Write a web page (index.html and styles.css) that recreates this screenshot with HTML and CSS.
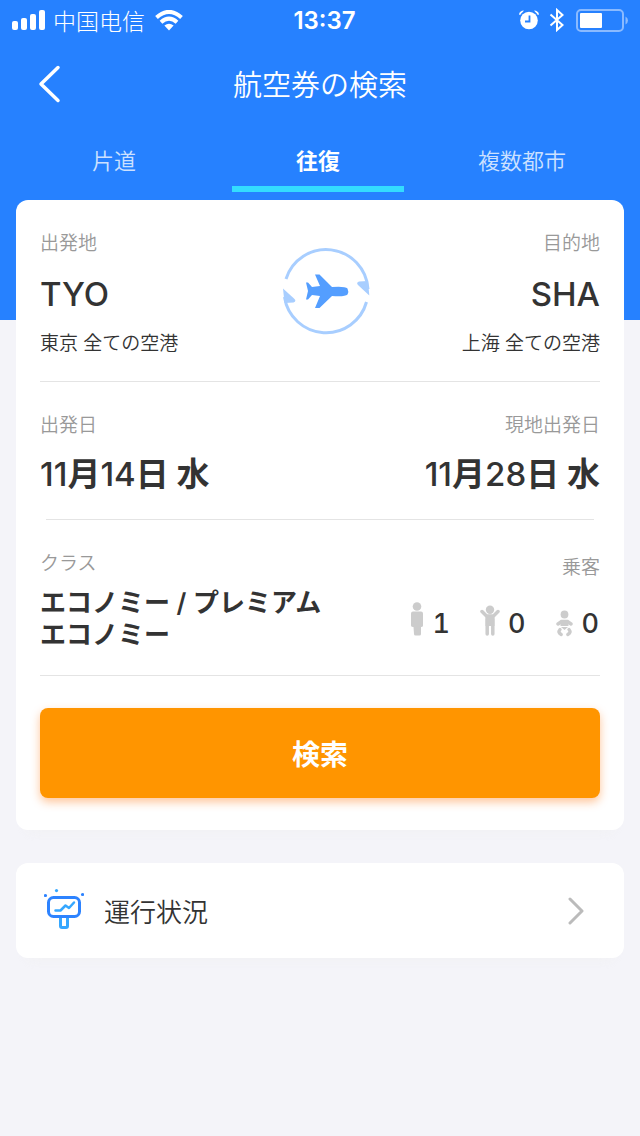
FILE: index.html
```html
<!DOCTYPE html>
<html lang="ja">
<head>
<meta charset="utf-8">
<meta name="viewport" content="width=device-width, initial-scale=1">
<title>航空券の検索</title>
<link rel="stylesheet" href="styles.css">
</head>
<body>
<header class="header">
  <div class="status">
    <div class="status-side">
      <svg width="34" height="20" viewBox="0 0 34 20" fill="#fff" aria-hidden="true"><rect x="0" y="11" width="6" height="9" rx="2"/><rect x="9" y="8" width="6" height="12" rx="2"/><rect x="18" y="4" width="6" height="16" rx="2"/><rect x="27" y="0" width="6" height="20" rx="2"/></svg>
      <span class="carrier" lang="zh-CN">中国电信</span>
      <svg class="wifi" width="28" height="21" viewBox="0 0 28 21" aria-hidden="true"><path d="M1.500 7.500Q14-3.700 26.500 7.500M6 12.200Q14 5 22 12.200" fill="none" stroke="#fff" stroke-width="4"/><path d="M9.400 15.600Q14 11.800 18.600 15.600L14 20.500z" fill="#fff"/></svg>
    </div>
    <span class="clock">13:37</span>
    <div class="status-side status-right">
      <svg width="20" height="20" viewBox="0 0 20 20" aria-hidden="true"><circle cx="10" cy="10.500" r="8.800" fill="#fff"/><path d="M0 4.500Q.5.800 5 .5L3.500 2.300Q2 3.300 1.200 5zM20 4.500Q19.500.8 15 .5l1.500 1.800q1.500 1 2.300 2.700z" fill="#fff"/><path d="M10.500 5.500v6H6" fill="none" stroke="#2681ff" stroke-width="1.800"/></svg>
      <svg width="16" height="24" viewBox="0 0 16 24" fill="none" stroke="#fff" stroke-width="2" aria-hidden="true"><path d="M1.500 6.500 13.500 17 8 22V2l5.500 5L1.500 17.500"/></svg>
      <svg width="53" height="24" viewBox="0 0 53 24" aria-hidden="true"><rect x="2" y="2" width="46" height="21" rx="4" fill="none" stroke="#8abaff" stroke-width="2"/><rect x="5" y="5" width="22" height="15" rx="1" fill="#fff"/><path d="M50.500 8.500q2.500 1.500 2.500 4t-2.500 4z" fill="#8abaff"/></svg>
    </div>
  </div>
  <div class="nav">
    <button class="back" aria-label="戻る"><svg width="24" height="40" viewBox="0 0 24 40" fill="none" stroke="#fff" stroke-width="3.500" stroke-linecap="round" stroke-linejoin="round" aria-hidden="true"><path d="M20 3.500 3 20l17 16.500"/></svg></button>
    <h1 class="title">航空券の検索</h1>
  </div>
  <nav class="tabs">
    <button class="tab">片道</button>
    <button class="tab tab-active" aria-current="page">往復</button>
    <button class="tab">複数都市</button>
  </nav>
</header>
<main class="main">
  <section class="card search">
    <div class="row route">
      <button class="field">
        <span class="label">出発地</span>
        <span class="code">TYO</span>
        <span class="airport">東京 全ての空港</span>
      </button>
      <button class="swap" aria-label="出発地と目的地を入れ替える">
        <svg width="88" height="88" viewBox="0 0 88 88" aria-hidden="true">
          <g fill="none" stroke="#a8ceff" stroke-width="3"><path d="M4 31A42 42 0 0 1 86 41"/><path d="M2.500 49A42 42 0 0 0 84.500 54"/></g>
          <path d="M87.300 47.500 86 33l-9 .5q-3.500 1.500-.5 4zM1 40.500 2.500 55l9-.5q3.500-1.500.5-4z" fill="#a8ceff"/>
          <path d="M33 26.500h4.500L50 39q13-1 15.500 1.500 1.500 3 0 6-2.500 2.500-15.500 1.500L37.500 60H33L38 48l-8-1-4 4.500h-2L26 43l-2-8.500h2l4 4.500 8-1z" fill="#549eff"/>
        </svg>
      </button>
      <button class="field field-end">
        <span class="label">目的地</span>
        <span class="code">SHA</span>
        <span class="airport">上海 全ての空港</span>
      </button>
    </div>
    <hr class="line">
    <div class="row">
      <button class="field">
        <span class="label">出発日</span>
        <span class="date"><span class="num">11</span>月<span class="num">14</span>日 水</span>
      </button>
      <button class="field field-end">
        <span class="label">現地出発日</span>
        <span class="date"><span class="num">11</span>月<span class="num">28</span>日 水</span>
      </button>
    </div>
    <hr class="line line-inset">
    <div class="row">
      <button class="field">
        <span class="label">クラス</span>
        <span class="cabin">エコノミー / プレミアム<br>エコノミー</span>
      </button>
      <button class="field field-end passengers">
        <span class="label">乗客</span>
        <span class="counts">
          <span class="count"><svg width="14" height="36" viewBox="0 0 14 36" fill="#ccc" role="img" aria-label="大人"><circle cx="6" cy="4.500" r="4.300"/><path d="M2 9.500h8q2 0 2 2v12q0 1.500-2 1.500v7q0 1.500-1.500 1.500h-4Q3 33.500 3 32l-.5-7Q0 25 0 23.500v-12q0-2 2-2z"/></svg>1</span>
          <span class="count"><svg width="20" height="36" viewBox="0 0 20 36" fill="none" stroke="#ccc" stroke-linecap="round" role="img" aria-label="子供"><circle cx="10" cy="7.800" r="4.200" fill="#ccc" stroke="none"/><path d="M2 9.500 6.500 14h7L18 9.500" stroke-width="3.500" stroke-linejoin="round"/><path d="M5.500 13h9v11h-9z" fill="#ccc" stroke="none"/><path d="M7.200 17v15M12.800 17v15" stroke-width="3.500"/></svg>0</span>
          <span class="count"><svg width="18" height="36" viewBox="0 0 18 36" fill="none" stroke="#ccc" stroke-linecap="round" role="img" aria-label="幼児"><circle cx="8.500" cy="12.500" r="3.900" fill="#ccc" stroke="none"/><path d="M2 22 5.500 19.500h6L15 22" stroke-width="3.400"/><path d="M4.500 18.500h8V24h-8z" fill="#ccc" stroke="none"/><path d="M5 25h7l-3.500 3z" fill="#ccc" stroke="none"/><path d="M4 27.500q-2.500 3 1.200 5M13 27.500q2.500 3-1.200 5" stroke-width="3.400"/></svg>0</span>
        </span>
      </button>
    </div>
    <hr class="line">
    <button class="submit">検索</button>
  </section>
  <a class="card flight-status" href="#status">
    <svg width="40" height="44" viewBox="0 0 40 44" fill="none" aria-hidden="true"><g fill="#2d83ff"><circle cx="1.500" cy="6.500" r="1.600"/><circle cx="12.500" cy="1.600" r="1.600" fill="#35a7ff"/><circle cx="38.500" cy="5.500" r="1.600"/></g><path d="M16.500 28v9q0 1.500 1.500 1.500h4q1.500 0 1.500-1.500v-9" stroke="#35a7ff" stroke-width="3"/><rect x="4.500" y="8.500" width="31" height="19" rx="5" stroke="#2d83ff" stroke-width="3"/><path d="M11.500 21.500h5l5-5 3.500 2.500 5-5.500" stroke="#35a7ff" stroke-width="2.500" stroke-linecap="round" stroke-linejoin="round"/></svg>
    <span class="flight-status-text">運行状況</span>
    <svg width="18" height="28" viewBox="0 0 18 28" fill="none" stroke="#bbb" stroke-width="3" stroke-linecap="round" stroke-linejoin="round" aria-hidden="true"><path d="m3 2 12 12L3 26"/></svg>
  </a>
</main>
</body>
</html>
```
FILE: styles.css
```css
* {
  box-sizing: border-box;
}

body {
  margin: 0;
  background: #f4f4f9;
  color: #333;
  font-family: Inter, "Noto Sans CJK JP", sans-serif;
}

button {
  margin: 0;
  padding: 0;
  border: 0;
  background: none;
  color: inherit;
  font: inherit;
}

svg {
  display: block;
  flex: none;
}

.header {
  padding-bottom: 128px;
  background: #2681ff;
  color: #fff;
}

.status {
  display: grid;
  grid-template-columns: 1fr auto 1fr;
  align-items: center;
  height: 40px;
  padding: 0 12px;
}

.status-side {
  display: flex;
  align-items: center;
  gap: 7px;
}

.status-right {
  justify-content: flex-end;
  gap: 10px;
}

.carrier {
  font-family: "Noto Sans CJK SC", sans-serif;
  font-size: 23px;
  font-weight: 300;
  line-height: 32px;
}

.wifi {
  margin-left: 3px;
}

.clock {
  padding-left: 9px;
  font-size: 24px;
  font-weight: 600;
}

.nav {
  display: grid;
  grid-template-columns: 1fr auto 1fr;
  align-items: center;
  height: 88px;
  padding: 0 38px;
}

.back {
  justify-self: start;
}

.title {
  margin: 0;
  padding-top: 4px;
  font-size: 29px;
  font-weight: 350;
  line-height: 40px;
}

.tabs {
  display: grid;
  grid-template-columns: repeat(3, 1fr);
  padding: 0 16px 0 12px;
}

.tab {
  height: 64px;
  margin: 0 16px;
  border-top: 4px solid transparent;
  border-bottom: 6px solid transparent;
  color: #cde1ff;
  font-size: 22px;
  font-weight: 350;
}

.tab-active {
  border-bottom-color: #33dcff;
  color: #fff;
  font-weight: 700;
}

.main {
  display: grid;
  gap: 33px;
  margin-top: -120px;
  padding: 0 16px 32px;
}

.card {
  border-radius: 12px;
  background: #fff;
  box-shadow: 0 12px 12px -12px rgba(240, 240, 240, 0.8);
}

.search {
  padding: 0 24px 32px;
}

.row {
  display: flex;
  justify-content: space-between;
  padding: 30px 0 23px;
}

.field {
  display: flex;
  flex-direction: column;
  align-items: flex-start;
  text-align: left;
}

.field-end {
  align-items: flex-end;
  text-align: right;
}

.label {
  color: #999;
  font-size: 19px;
  font-weight: 350;
  line-height: 28px;
}

.route .field {
  flex: 1;
}

.code {
  margin: 14px 0;
  font-size: 33px;
  font-weight: 500;
  line-height: 44px;
}

.airport {
  font-size: 19px;
  font-weight: 350;
  line-height: 28px;
}

.swap {
  align-self: flex-start;
  margin-top: 18px;
  padding-left: 12px;
}

.line {
  width: 100%;
  height: 1px;
  margin: 0;
  border: 0;
  background: #e4e4e4;
}

.line-inset {
  width: auto;
  margin: 0 6px;
}

.date {
  margin-top: 12px;
  font-size: 33px;
  font-weight: 700;
  line-height: 44px;
}

.num {
  font-weight: 500;
}

.cabin {
  margin-top: 9px;
  padding-bottom: 1px;
  font-size: 26px;
  font-weight: 600;
  line-height: 32px;
}

.passengers {
  padding-top: 4px;
}

.counts {
  display: flex;
  gap: 30px;
  margin-top: 20px;
  padding-right: 1px;
}

.count {
  display: flex;
  align-items: flex-start;
  gap: 8px;
  font-size: 27px;
  font-weight: 500;
  font-variant-numeric: tabular-nums;
  line-height: 44px;
}

.submit {
  display: block;
  width: 100%;
  height: 90px;
  margin-top: 32px;
  border-radius: 8px;
  background: #ff9500;
  box-shadow: 0 4px 10px rgba(255, 111, 0, 0.4);
  color: #fff;
  font-size: 28px;
  font-weight: 700;
}

.flight-status {
  display: flex;
  align-items: center;
  gap: 20px;
  height: 95px;
  padding: 0 39px 0 28px;
  color: inherit;
  text-decoration: none;
}

.flight-status-text {
  flex: 1;
  font-size: 26px;
  font-weight: 350;
}
```
